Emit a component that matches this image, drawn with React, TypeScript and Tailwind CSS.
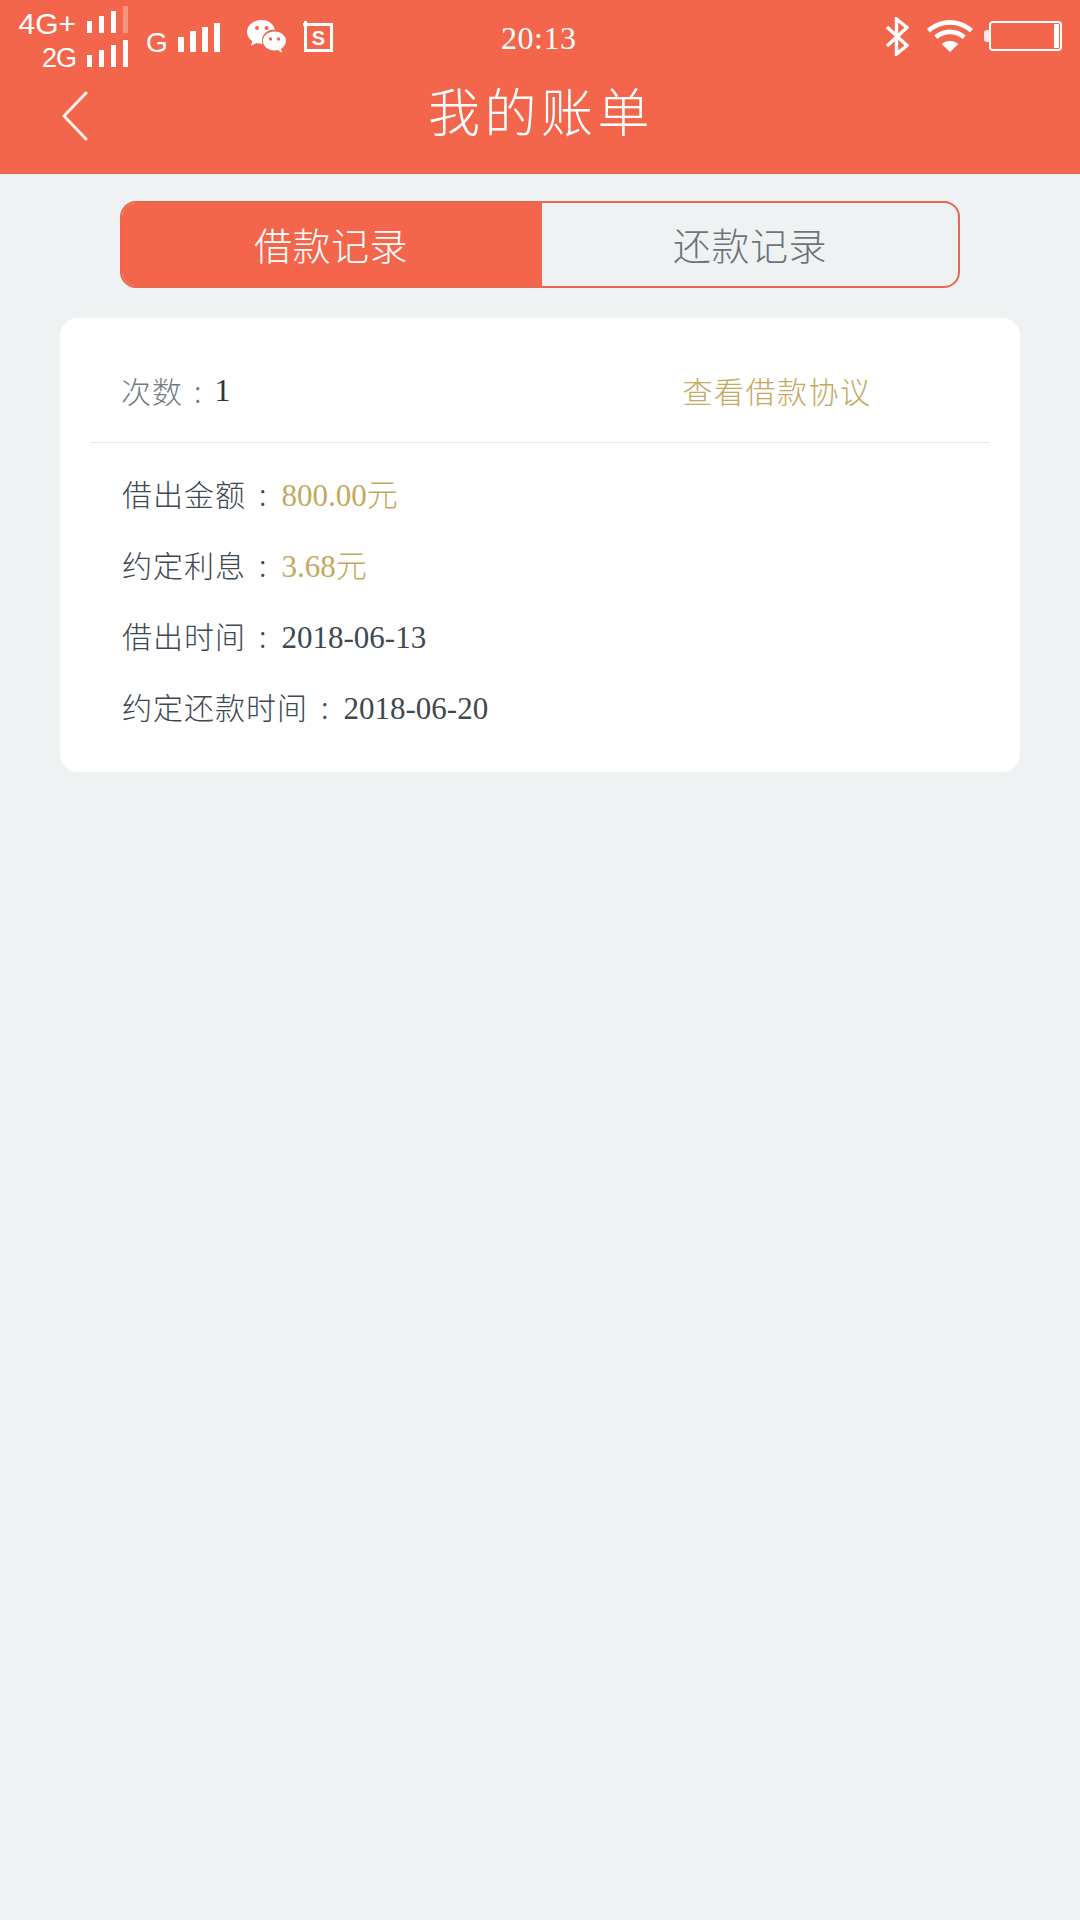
import React from 'react';

const cjk = "font-['Noto_Sans_CJK_SC',sans-serif]";
const serifNum = "font-['Liberation_Serif','Noto_Sans_CJK_SC',serif]";

function Bars({ dim, heights, wide }: { dim?: boolean; heights: number[]; wide?: boolean }) {
  return (
    <div className={wide ? 'flex items-end gap-[6px]' : 'flex items-end gap-[7px]'}>
      {heights.map((h, i) => (
        <span
          key={i}
          className={(wide ? 'w-[6px] ' : 'w-[5px] ') + (dim && i === 3 ? 'bg-white/30' : 'bg-white')}
          style={{ height: h }}
        />
      ))}
    </div>
  );
}

function WeChatIcon() {
  return (
    <svg width="39" height="34" viewBox="0 0 39 34" fill="white">
      <path d="M15 0C6.7 0 0 5.3 0 12c0 3.7 2 6.9 5.200 9.100L4 26l5.400-2.900c1.700.5 3.500.8 5.600.8h.6c-.4-1.200-.6-2.300-.6-3.500C15 14 21 9.300 28 9.600 26.500 3.900 21.200 0 15 0z" />
      <circle cx="10" cy="8" r="2" fill="#f3664c" />
      <circle cx="19.500" cy="8" r="2" fill="#f3664c" />
      <path d="M27.500 11.500c-6.300 0-11.500 4.200-11.500 9.500s5.200 9.500 11.500 9.500c1.300 0 2.500-.2 3.700-.5L35 33l-.9-4.300c2.900-1.800 4.900-4.600 4.900-7.700 0-5.300-5.200-9.500-11.500-9.500z" />
      <circle cx="23.500" cy="19" r="1.700" fill="#f3664c" />
      <circle cx="31.500" cy="19" r="1.700" fill="#f3664c" />
    </svg>
  );
}

function StatusBar() {
  return (
    <div className="relative flex h-[70px] items-start pl-[18px] text-white">
      <div className="flex w-[110px] flex-col items-end pt-[6px]">
        <div className="flex items-end gap-[11px]">
          <span className="font-['Liberation_Sans',sans-serif] text-[30px] leading-[19px]">4G+</span>
          <Bars dim heights={[12, 17, 22, 27]} />
        </div>
        <div className="mt-[7px] flex items-end gap-[11px]">
          <span className="font-['Liberation_Sans',sans-serif] text-[27px] leading-[17px] tracking-[-1px]">2G</span>
          <Bars heights={[12, 17, 22, 27]} />
        </div>
      </div>
      <div className="ml-[18px] mt-[23px] flex items-end gap-[10px]">
        <span className="font-['Liberation_Sans',sans-serif] text-[28px] leading-[19px]">G</span>
        <Bars wide heights={[15, 21, 25, 29]} />
      </div>
      <div className="ml-[27px] mt-[20px]">
        <WeChatIcon />
      </div>
      <svg className="ml-[17px] mt-[20px]" width="30" height="32" viewBox="0 0 30 32" fill="none">
        <path d="M0 4.500h28.500v26h-26V1" stroke="white" strokeWidth="3" />
        <text x="15.500" y="25" fill="white" fontSize="20" fontWeight="700" textAnchor="middle" fontFamily="Liberation Sans">S</text>
      </svg>
      <span className={`absolute left-[501px] top-[18px] text-[32px] leading-[40px] tracking-[0.5px] ${serifNum}`}>20:13</span>
      <div className="ml-auto flex items-start pr-[18px]">
        <svg className="mt-[17px]" width="24" height="39" viewBox="0 0 24 39" fill="none" stroke="white" strokeWidth="3.400">
          <path d="M2 10l20 18.500L11.500 37V2L22 10.500 2 29" />
        </svg>
        <svg className="ml-[18px] mt-[20px]" width="46" height="32" viewBox="0 0 46 32" fill="white">
          <path d="M23 0C14.200 0 6.200 3.500 0 9l3 3.500C8.300 7.800 15.300 4.800 23 4.800s14.700 3 20 7.700L46 9C39.800 3.500 31.800 0 23 0z" />
          <path d="M23 9.500c-6 0-11.500 2.300-15.700 6l3 3.500c3.400-3 7.900-4.800 12.700-4.800s9.300 1.800 12.700 4.800l3-3.500c-4.200-3.700-9.700-6-15.700-6z" />
          <path d="M23 21c-3.200 0-6 1.100-8.300 3L23 32l8.300-8c-2.300-1.900-5.100-3-8.300-3z" />
        </svg>
        <div className="ml-[11px] mt-[21px] flex items-center">
          <span className="h-[12px] w-[5px] rounded-l-[3px] bg-white/85" />
          <div className="flex h-[30px] w-[73px] items-center justify-end rounded-[4px] border-2 border-white pr-[1px]">
            <span className="h-[24px] w-[5px] bg-white" />
          </div>
        </div>
      </div>
    </div>
  );
}

function Row({ label, value, gold }: { label: string; value: string; gold?: boolean }) {
  return (
    <div className={`flex h-[71px] items-center text-[30px] text-[#3e4852] ${cjk} font-light`}>
      <span className="tracking-[1px]">{label}</span>
      <span className="ml-[13px] mr-[15px]">:</span>
      <span className={`pt-[5px] text-[31px] ${serifNum} ${gold ? 'text-[#c4a85f]' : 'text-[#3e4852]'}`}>{value}</span>
    </div>
  );
}

export default function App() {
  return (
    <div className={`min-h-[1920px] w-[1080px] bg-[#eef2f3] ${cjk}`}>
      <header className="h-[174px] bg-[#f3664c] text-white">
        <StatusBar />
        <div className="relative flex h-[68px] items-center justify-center pt-[12px]">
          <svg className="absolute left-[62px] top-[20px]" width="26" height="52" viewBox="0 0 26 52" fill="none" stroke="white" strokeWidth="3" strokeLinecap="round" strokeOpacity="0.9">
            <path d="M24 3L2 26l22 23" />
          </svg>
          <h1 className="ml-[2px] text-[52px] font-light leading-[68px] tracking-[4.500px]">我的账单</h1>
        </div>
      </header>

      <main className="flex flex-col items-center pt-[27px]">
        <div className="flex h-[87px] w-[840px] overflow-hidden rounded-[16px] border-2 border-[#e9664f] text-[38px] font-light tracking-[0.5px]">
          <div className="flex w-[420px] items-center justify-center bg-[#f3664c] pb-[2px] pr-[2px] text-white">借款记录</div>
          <div className="flex flex-1 items-center justify-center pb-[2px] text-[#6e7476]">还款记录</div>
        </div>

        <section className="mt-[30px] h-[454px] w-[960px] rounded-[18px] bg-white">
          <div className="mx-[30px] flex h-[125px] items-center border-b border-[#e6e8e9] pl-[31px] pt-[20px] text-[30px] font-light">
            <span className="tracking-[1px] text-[#777c80]">次数</span>
            <span className="ml-[11px] mr-[13px] text-[#777c80]">:</span>
            <span className={`text-[32px] text-[#333] ${serifNum}`}>1</span>
            <span className="ml-[452px] tracking-[1.500px] text-[#c4a85f]">查看借款协议</span>
          </div>
          <div className="pl-[62px] pt-[15px]">
            <Row label="借出金额" value="800.00元" gold />
            <Row label="约定利息" value="3.68元" gold />
            <Row label="借出时间" value="2018-06-13" />
            <Row label="约定还款时间" value="2018-06-20" />
          </div>
        </section>
      </main>
    </div>
  );
}
